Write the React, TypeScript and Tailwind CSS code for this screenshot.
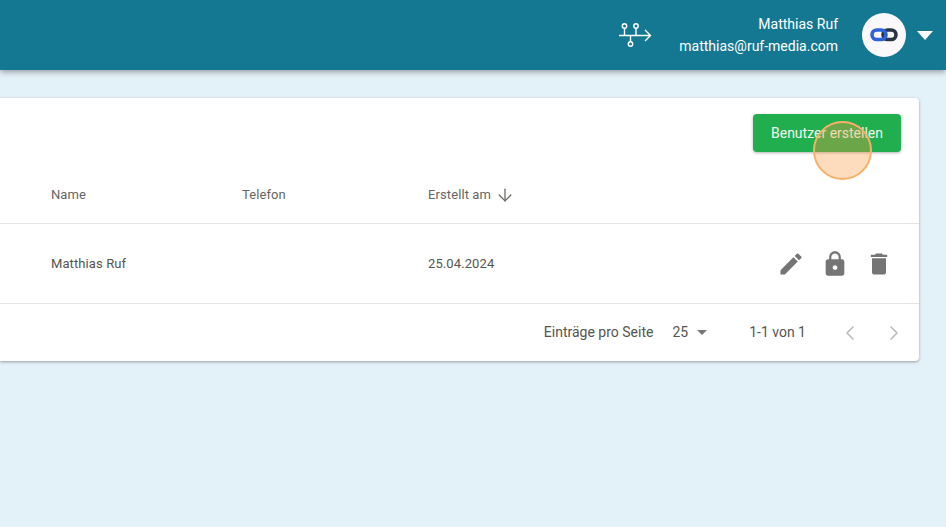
import { ArrowDown, ChevronLeft, ChevronRight } from 'lucide-react';

const FlowIcon = () => (
    <svg width="34" height="28" viewBox="0 0 34 28" fill="none" stroke="white" strokeWidth="1.4">
        <circle cx="6.5" cy="5" r="2.2" />
        <circle cx="18" cy="5" r="2.2" />
        <circle cx="12.5" cy="23" r="2.2" />
        <path d="M1 14.5H32M27 9L32.5 14.5L27 20M6.5 7.2V14.5M18 7.2V14.5M12.5 14.5V20.8" />
    </svg>
);

const LinkLogo = () => (
    <svg width="28" height="14" viewBox="0 0 28 14" fill="none" strokeWidth="3.6">
        <rect x="13" y="2" width="13" height="9.5" rx="4.75" stroke="#2b3444" />
        <rect x="2" y="2" width="14" height="9.5" rx="4.75" stroke="#2f62d6" />
    </svg>
);

const PencilIcon = () => (
    <svg width="28" height="28" viewBox="0 0 24 24" fill="#757575">
        <path d="M3 17.25V21h3.75L17.81 9.94l-3.75-3.75L3 17.25zM20.71 7.04a1 1 0 0 0 0-1.41l-2.34-2.34a1 1 0 0 0-1.41 0l-1.83 1.83 3.75 3.75 1.83-1.83z" />
    </svg>
);

const LockIcon = () => (
    <svg width="28" height="28" viewBox="0 0 24 24" fill="#757575">
        <path d="M18 8h-1V6c0-2.76-2.24-5-5-5S7 3.24 7 6v2H6c-1.1 0-2 .9-2 2v10c0 1.1.9 2 2 2h12c1.1 0 2-.9 2-2V10c0-1.1-.9-2-2-2zm-6 9c-1.1 0-2-.9-2-2s.9-2 2-2 2 .9 2 2-.9 2-2 2zm3.1-9H8.9V6c0-1.71 1.39-3.1 3.1-3.1 1.71 0 3.1 1.39 3.1 3.1v2z" />
    </svg>
);

const TrashIcon = () => (
    <svg width="28" height="28" viewBox="0 0 24 24" fill="#757575">
        <path d="M6 19c0 1.1.9 2 2 2h8c1.1 0 2-.9 2-2V7H6v12zM19 4h-3.5l-1-1h-5l-1 1H5v2h14V4z" />
    </svg>
);

export default function App() {
    return (
        <div className="relative h-[527px] w-[946px] overflow-hidden bg-[#e3f1f8] font-['Roboto',sans-serif]">
            {/* Header */}
            <header className="relative flex h-[70px] items-center justify-end bg-[#157892] shadow-[0_2px_6px_rgba(0,0,0,0.35)]">
                <div className="mr-[27px]">
                    <FlowIcon />
                </div>
                <div className="flex flex-col items-end text-[14px] leading-[22px] text-white">
                    <span>Matthias Ruf</span>
                    <span>matthias@ruf-media.com</span>
                </div>
                <div className="ml-6 flex h-11 w-11 items-center justify-center rounded-full bg-[#fbf8fb]">
                    <LinkLogo />
                </div>
                <div className="mr-[13px] ml-[11px] h-0 w-0 border-x-[8.5px] border-t-[9px] border-x-transparent border-t-white" />
            </header>

            {/* Card */}
            <main className="pt-7 pr-[27px]">
                <div className="rounded-r bg-white text-[13px] tracking-[0.1px] text-[#55554f] shadow-[0_1px_3px_rgba(0,0,0,0.35)]">
                    <div className="flex h-[72px] justify-end pt-4 pr-[18px]">
                        <button className="h-[38px] w-[148px] rounded bg-[#21ae4e] text-[14px] tracking-normal text-[#f2f7ee] shadow-[0_1px_3px_rgba(0,0,0,0.3)]">
                            Benutzer erstellen
                        </button>
                    </div>
                    <div className="flex h-[54px] items-center border-b border-[#e4e4e4] pb-[3px] pl-[51px] text-[#66665f]">
                        <span className="w-[191px]">Name</span>
                        <span className="w-[186px]">Telefon</span>
                        <span className="flex items-center gap-1">
                            Erstellt am
                            <ArrowDown size={20} strokeWidth={1.5} />
                        </span>
                    </div>
                    <div className="flex h-20 items-center border-b border-[#e4e4e4] pl-[51px]">
                        <span className="w-[377px]">Matthias Ruf</span>
                        <span>25.04.2024</span>
                        <div className="mr-[26px] ml-auto flex gap-4">
                            <PencilIcon />
                            <LockIcon />
                            <TrashIcon />
                        </div>
                    </div>
                    <div className="flex h-[57px] items-center justify-end pr-[13px] text-[14px] tracking-normal">
                        <span>Einträge pro Seite</span>
                        <span className="ml-[19px]">25</span>
                        <div className="ml-[9px] h-0 w-0 border-x-[5.5px] border-t-[5px] border-x-transparent border-t-[#777777]" />
                        <span className="ml-[42px]">1-1 von 1</span>
                        <ChevronLeft className="ml-8 text-[#bdbdbd]" size={24} strokeWidth={1.7} />
                        <ChevronRight className="ml-5 text-[#bdbdbd]" size={24} strokeWidth={1.7} />
                    </div>
                </div>
            </main>

            {/* Click highlight */}
            <div className="absolute top-[121px] left-[813px] h-[59px] w-[59px] rounded-full border-2 border-[#f6b06a] bg-[#f59a3e]/35" />
        </div>
    );
}
